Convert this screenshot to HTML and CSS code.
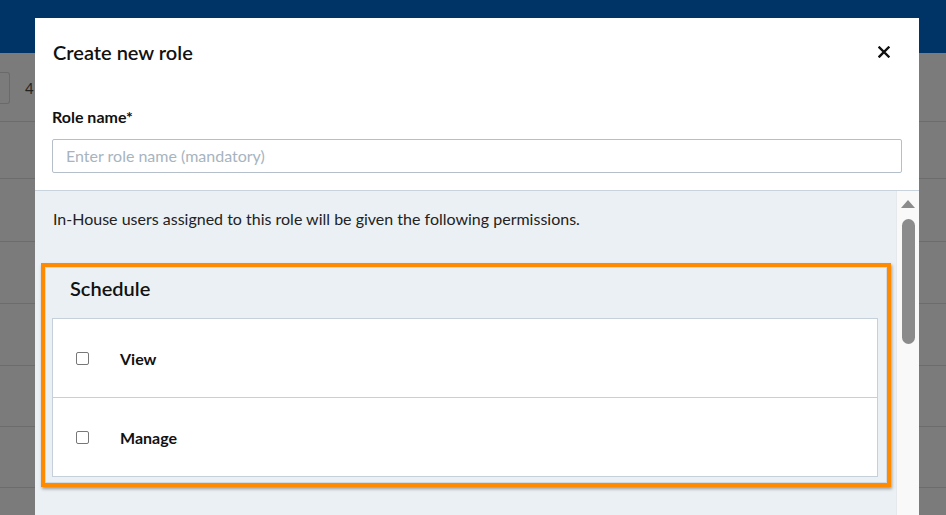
FILE: index.html
```html
<!DOCTYPE html>
<html lang="en">
<head>
<meta charset="utf-8">
<title>Create new role</title>
<link rel="stylesheet" href="styles.css">
</head>
<body>
<div class="page">
  <header class="topbar"></header>
  <div class="toolbar">
    <div class="pager-box"></div>
    <span class="pager-num">4</span>
  </div>
  <div class="bg-row r1"></div>
  <div class="bg-row r2"></div>
  <div class="bg-row r3"></div>
  <div class="bg-row r4"></div>
  <div class="bg-row r5"></div>
  <div class="bg-row r6"></div>
</div>

<div class="modal">
  <div class="modal-head">
    <h2 class="modal-title">Create new role</h2>
    <button class="close-btn" aria-label="Close">
      <svg width="12" height="12" viewBox="0 0 12 12"><path d="M1.5 1.5 L10.5 10.5 M10.5 1.5 L1.5 10.5" stroke="#111" stroke-width="2.4" stroke-linecap="square"/></svg>
    </button>
  </div>
  <div class="field">
    <label class="field-label">Role name*</label>
    <div class="text-input">Enter role name (mandatory)</div>
  </div>
  <div class="scroll-area">
    <div class="scroll-content">
      <p class="intro">In-House users assigned to this role will be given the following permissions.</p>
      <section class="perm-card">
        <div class="perm-inner">
          <h3 class="perm-title">Schedule</h3>
          <ul class="perm-list">
            <li class="perm-row"><span class="checkbox"></span><span class="perm-label">View</span></li>
            <li class="perm-row"><span class="checkbox"></span><span class="perm-label">Manage</span></li>
          </ul>
        </div>
      </section>
    </div>
    <div class="scrollbar">
      <span class="scroll-arrow"></span>
      <span class="scroll-thumb"></span>
    </div>
  </div>
</div>
</body>
</html>
```

FILE: styles.css
```css
* { box-sizing: border-box; }
html, body { margin: 0; padding: 0; }
body {
  width: 946px;
  height: 515px;
  overflow: hidden;
  background: #7b7b7b;
  font-family: Lato, "Open Sans", sans-serif;
  position: relative;
}
.page { display: flex; flex-direction: column; }
.topbar { height: 53px; background: #003466; }
.toolbar {
  height: 69px;
  display: flex;
  align-items: center;
  gap: 15px;
  padding-top: 2px;
  border-bottom: 1px solid #6c6c6c;
}
.pager-box {
  width: 10px;
  height: 32px;
  border: 1px solid #6a6a6a;
  border-left: none;
  border-radius: 0 3px 3px 0;
}
.pager-num { color: #222; font-size: 15px; }
.bg-row { border-bottom: 1px solid #6c6c6c; }
.r1 { height: 57px; }
.r2 { height: 63px; }
.r3 { height: 62px; }
.r4 { height: 62px; }
.r5 { height: 61px; }
.r6 { height: 61px; }

.modal {
  position: absolute;
  left: 35px;
  top: 18px;
  width: 884px;
  height: 520px;
  background: #fff;
  display: flex;
  flex-direction: column;
}
.modal-head {
  display: flex;
  align-items: center;
  justify-content: space-between;
  padding: 22px 29px 0 18px;
  margin-bottom: 43px;
}
.modal-title {
  margin: 0;
  font-size: 20px;
  font-weight: 600;
  color: #111;
  line-height: 24px;
}
.close-btn {
  border: 0;
  background: none;
  padding: 0;
  width: 12px;
  height: 12px;
  display: flex;
}
.field { padding: 0 17px 0 17px; }
.field-label {
  display: block;
  font-size: 16px;
  font-weight: 700;
  color: #111;
  line-height: 20px;
  margin-bottom: 12px;
}
.text-input {
  height: 34px;
  border: 1px solid #b4bfca;
  border-radius: 2px;
  padding: 0 13px;
  line-height: 32px;
  font-size: 16px;
  color: #a7b4c0;
}
.scroll-area {
  margin-top: 17px;
  flex: 1;
  display: flex;
  border-top: 1px solid #c9d3dd;
  background: #ebf0f4;
}
.scroll-content {
  flex: 1;
  padding: 0 5px 0 6px;
}
.intro {
  margin: 18px 0 0 12px;
  font-size: 16px;
  line-height: 20px;
  color: #222;
}
.perm-card {
  margin-top: 34px;
  border: 4px solid #ff8a00;
  box-shadow: 1px 2px 3px rgba(0, 0, 0, 0.35);
}
.perm-inner {
  border: 1px solid #d2dae2;
  padding: 0 8px 5px 6px;
}
.perm-title {
  margin: 0;
  height: 50px;
  display: flex;
  align-items: center;
  padding: 0 0 10px 18px;
  font-size: 20px;
  font-weight: 600;
  color: #111;
}
.perm-list {
  list-style: none;
  margin: 0;
  padding: 0;
  background: #fff;
  border: 1px solid #c5d0db;
}
.perm-row {
  height: 78px;
  display: flex;
  align-items: center;
  padding-left: 23px;
  gap: 31px;
}
.perm-row + .perm-row { border-top: 1px solid #c5d0db; height: 79px; }
.checkbox {
  width: 13px;
  height: 13px;
  border: 1px solid #777;
  border-radius: 2px;
  background: #fff;
}
.perm-label {
  font-size: 16px;
  font-weight: 700;
  color: #111;
}
.scrollbar {
  width: 23px;
  background: #f9f9f9;
  border-left: 1px solid #e6e9ec;
  display: flex;
  flex-direction: column;
  align-items: center;
  padding-top: 9px;
  gap: 11px;
}
.scroll-arrow {
  width: 0;
  height: 0;
  border-left: 7px solid transparent;
  border-right: 7px solid transparent;
  border-bottom: 8px solid #8b8b8b;
}
.scroll-thumb {
  width: 13px;
  height: 125px;
  border-radius: 7px;
  background: #8b8b8b;
}
```
